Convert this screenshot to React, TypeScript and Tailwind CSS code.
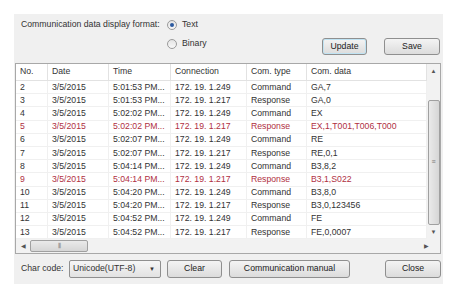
const rows: [string, string, string, string, string, string, boolean][] = [
  ['2', '3/5/2015', '5:01:53 PM...', '172. 19. 1.249', 'Command', 'GA,7', false],
  ['3', '3/5/2015', '5:01:53 PM...', '172. 19. 1.217', 'Response', 'GA,0', false],
  ['4', '3/5/2015', '5:02:02 PM...', '172. 19. 1.249', 'Command', 'EX', false],
  ['5', '3/5/2015', '5:02:02 PM...', '172. 19. 1.217', 'Response', 'EX,1,T001,T006,T000', true],
  ['6', '3/5/2015', '5:02:07 PM...', '172. 19. 1.249', 'Command', 'RE', false],
  ['7', '3/5/2015', '5:02:07 PM...', '172. 19. 1.217', 'Response', 'RE,0,1', false],
  ['8', '3/5/2015', '5:04:14 PM...', '172. 19. 1.249', 'Command', 'B3,8,2', false],
  ['9', '3/5/2015', '5:04:14 PM...', '172. 19. 1.217', 'Response', 'B3,1,S022', true],
  ['10', '3/5/2015', '5:04:20 PM...', '172. 19. 1.249', 'Command', 'B3,8,0', false],
  ['11', '3/5/2015', '5:04:20 PM...', '172. 19. 1.217', 'Response', 'B3,0,123456', false],
  ['12', '3/5/2015', '5:04:52 PM...', '172. 19. 1.249', 'Command', 'FE', false],
  ['13', '3/5/2015', '5:04:52 PM...', '172. 19. 1.217', 'Response', 'FE,0,0007', false],
];

const cols = ['w-[32px]', 'w-[61px]', 'w-[62px]', 'w-[76px]', 'w-[60px]', 'w-[120px]'];
const headers = ['No.', 'Date', 'Time', 'Connection', 'Com. type', 'Com. data'];

function Btn({ className, children }: { className: string; children: React.ReactNode }) {
  return (
    <button
      className={`flex items-center justify-center whitespace-nowrap rounded-[3px] border border-[#8f8f8f] bg-gradient-to-b from-[#f4f4f4] to-[#dcdcdc] text-[#222] ${className}`}
    >
      {children}
    </button>
  );
}

function Radio({ checked, label }: { checked: boolean; label: string }) {
  return (
    <div className="flex h-[11px] items-center gap-[5px]">
      <span className="flex h-[10px] w-[10px] items-center justify-center rounded-full border border-[#9a9a9a] bg-gradient-to-b from-[#e4e4e4] to-[#f8f8f8]">
        {checked && <span className="h-[4px] w-[4px] rounded-full bg-[#2c5aa0]" />}
      </span>
      <span>{label}</span>
    </div>
  );
}

export default function App() {
  return (
    <div className="h-[299px] w-[457px] bg-white pl-[14px] pt-[14px] font-['Liberation_Sans',Arial,sans-serif] text-[8.7px] text-[#333]">
      <div className="flex h-[270px] w-[429px] flex-col bg-[#f0f0f0]">
        {/* display format */}
        <div className="relative h-[49px]">
          <div className="flex pl-[7px] pt-[5px]">
            <span className="flex h-[11px] w-[146px] items-center whitespace-nowrap">Communication data display format:</span>
            <div className="flex flex-col gap-[8px]">
              <Radio checked label="Text" />
              <Radio checked={false} label="Binary" />
            </div>
          </div>
          <div className="absolute right-[3px] top-[24px] flex gap-[17px]">
            <Btn className="h-[17px] w-[45px] border-[#3c8fb7] shadow-[inset_0_0_0_1px_#bfe3f3]">Update</Btn>
            <Btn className="h-[17px] w-[56px]">Save</Btn>
          </div>
        </div>

        {/* table */}
        <div className="ml-[1px] flex h-[191px] w-[426px] flex-col border border-[#a8a8a8] bg-white">
          <div className="flex min-h-0 flex-1">
            <div className="flex-1">
              <div className="flex h-[17px] items-center border-b border-[#e2e2e2]">
                {headers.map((h, i) => (
                  <div key={h} className={`${cols[i]} flex h-full items-center border-r border-[#e2e2e2] pl-[4px]`}>
                    {h}
                  </div>
                ))}
              </div>
              {rows.map((r) => (
                <div
                  key={r[0]}
                  className={`flex h-[13.2px] items-center border-b border-[#f0f0f0] ${r[6] ? 'text-[#b0303f]' : ''}`}
                >
                  {r.slice(0, 6).map((c, i) => (
                    <div key={i} className={`${cols[i]} flex h-full items-center overflow-hidden whitespace-nowrap border-r border-[#f0f0f0] pl-[4px]`}>
                      {c as string}
                    </div>
                  ))}
                </div>
              ))}
            </div>
            {/* vertical scrollbar */}
            <div className="flex w-[14px] flex-col items-center bg-[#f2f2f2]">
              <div className="flex h-[14px] items-center text-[6px] text-[#555]">▲</div>
              <div className="mt-[22px] flex h-[125px] w-[12px] items-center justify-center rounded-[2px] border border-[#a0a0a0] bg-gradient-to-r from-[#eaeaea] to-[#d6d6d6] text-[7px] text-[#777]">
                ≡
              </div>
              <div className="mt-auto flex h-[14px] items-center text-[6px] text-[#555]">▼</div>
            </div>
          </div>
          {/* horizontal scrollbar */}
          <div className="flex h-[14px] items-center bg-[#f2f2f2]">
            <div className="w-[14px] text-center text-[6px] text-[#555]">◀</div>
            <div className="flex h-[12px] w-[58px] items-center justify-center rounded-[2px] border border-[#a0a0a0] bg-gradient-to-b from-[#eaeaea] to-[#d6d6d6] text-[7px] text-[#777]">
              ⦀
            </div>
            <div className="ml-auto w-[28px] text-center text-[6px] text-[#555]">▶</div>
          </div>
        </div>

        {/* bottom bar */}
        <div className="flex flex-1 items-center pl-[7px]">
          <span className="w-[48px] whitespace-nowrap">Char code:</span>
          <div className="flex h-[18px] w-[92px] items-center justify-between rounded-[2px] border border-[#8f8f8f] bg-gradient-to-b from-[#f6f6f6] to-[#e2e2e2] pl-[3px] pr-[5px]">
            <span className="whitespace-nowrap">Unicode(UTF-8)</span>
            <span className="text-[6px]">▼</span>
          </div>
          <Btn className="ml-[6px] h-[18px] w-[55px]">Clear</Btn>
          <Btn className="ml-[7px] h-[18px] w-[121px]">Communication manual</Btn>
          <Btn className="ml-[35px] h-[18px] w-[56px]">Close</Btn>
        </div>
      </div>
    </div>
  );
}
